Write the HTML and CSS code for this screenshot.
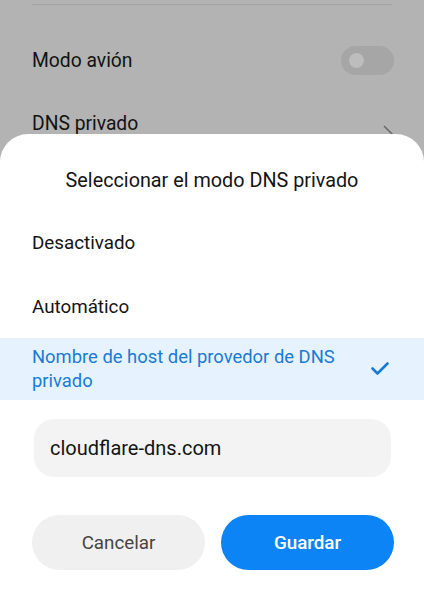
FILE: index.html
```html
<!DOCTYPE html>
<html lang="es">
<head>
<meta charset="utf-8">
<link rel="stylesheet" href="styles.css">
</head>
<body>
<div class="screen">
  <div class="settings">
    <div class="divider"></div>
    <div class="row">
      <span class="row-label">Modo avión</span>
      <span class="toggle"><span class="knob"></span></span>
    </div>
    <div class="row">
      <span class="row-label">DNS privado</span>
      <svg class="chevron" width="12" height="20" viewBox="0 0 12 20"><path d="M2 2 L10 10 L2 18" fill="none" stroke="#6a6a6a" stroke-width="1.6"/></svg>
    </div>
  </div>

  <div class="sheet">
    <div class="sheet-title">Seleccionar el modo DNS privado</div>
    <div class="option">Desactivado</div>
    <div class="option">Automático</div>
    <div class="option selected">
      <span class="option-text">Nombre de host del provedor de DNS privado</span>
      <svg class="check" width="18" height="14" viewBox="0 0 18 14"><path d="M1.5 6.5 L6.5 11.5 L16.5 1.5" fill="none" stroke="#1a7bd3" stroke-width="2.6" stroke-linecap="round" stroke-linejoin="round"/></svg>
    </div>
    <div class="input">cloudflare-dns.com</div>
    <div class="buttons">
      <button class="btn btn-cancel">Cancelar</button>
      <button class="btn btn-save">Guardar</button>
    </div>
  </div>
</div>
</body>
</html>
```

FILE: styles.css
```css
* { box-sizing: border-box; }
html, body { margin: 0; padding: 0; }
body {
  width: 424px;
  height: 600px;
  overflow: hidden;
  font-family: Roboto, "Noto Sans", "Liberation Sans", sans-serif;
  background: #b3b3b3;
}
.screen {
  position: relative;
  width: 424px;
  height: 600px;
}
.settings {
  padding: 4px 32px 0 32px;
}
.divider {
  height: 1px;
  background: #a3a3a3;
  margin-bottom: 24px;
}
.row {
  height: 63px;
  display: flex;
  align-items: center;
  justify-content: space-between;
}
.row-label {
  font-size: 19.3px;
  color: #121212;
}
.toggle {
  width: 53px;
  height: 29px;
  border-radius: 15px;
  background: #a6a6a6;
  display: flex;
  align-items: center;
  padding-left: 8px;
  margin-right: -2px;
}
.knob {
  width: 15px;
  height: 15px;
  border-radius: 50%;
  background: #bdbdbd;
}
.chevron {
  margin-right: -2px;
  margin-top: 20px;
}
.sheet {
  position: absolute;
  left: 0;
  right: 0;
  bottom: 0;
  top: 134px;
  background: #ffffff;
  border-radius: 28px 28px 0 0;
}
.sheet-title {
  padding: 35px 0 18px;
  line-height: 24px;
  text-align: center;
  font-size: 19.8px;
  color: #141414;
}
.option {
  height: 64px;
  display: flex;
  align-items: center;
  padding: 0 32px;
  font-size: 18.8px;
  color: #141414;
}
.option.selected {
  height: 62px;
  margin-top: -1px;
  background: #e6f2fd;
  color: #1a7bd3;
  justify-content: space-between;
  padding: 7px 35px 7px 32px;
}
.option-text {
  line-height: 24px;
  max-width: 320px;
  font-size: 18.4px;
}
.check {
  flex: none;
}
.input {
  margin: 19px 33px 0 34px;
  height: 58px;
  border-radius: 20px;
  background: #f3f3f3;
  display: flex;
  align-items: center;
  padding-left: 16px;
  font-size: 20px;
  color: #141414;
}
.buttons {
  display: grid;
  grid-template-columns: 1fr 1fr;
  gap: 16px;
  padding: 0 30px 0 32px;
  margin-top: 38px;
}
.btn {
  height: 55px;
  border: none;
  border-radius: 28px;
  font-family: inherit;
  font-size: 18.8px;
}
.btn-cancel {
  background: #f0f0f0;
  color: #454545;
}
.btn-save {
  background: #0d84f6;
  color: #ffffff;
  font-weight: 500;
}
```
